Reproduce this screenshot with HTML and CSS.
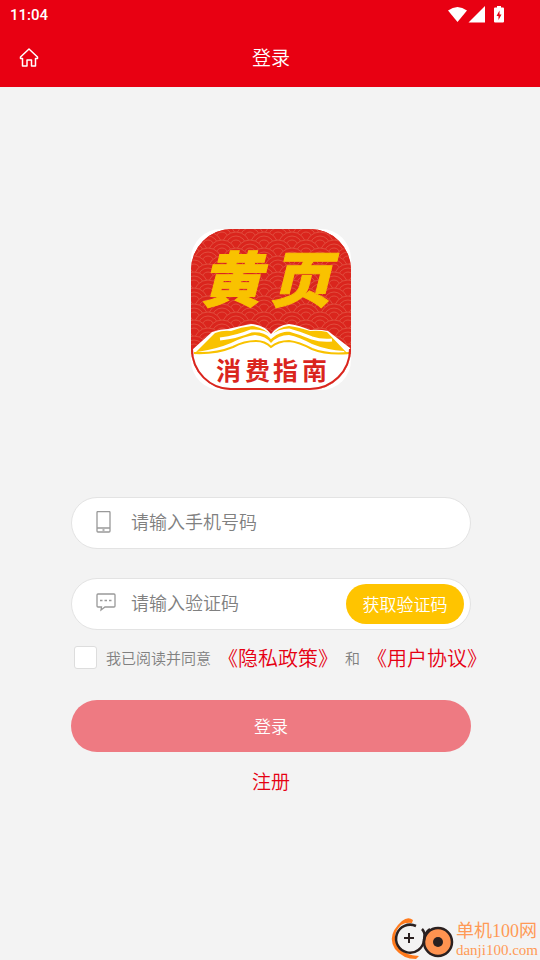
FILE: index.html
```html
<!DOCTYPE html>
<html lang="zh-CN">
<head>
<meta charset="utf-8">
<meta name="viewport" content="width=device-width, initial-scale=1">
<title>登录</title>
<link rel="stylesheet" href="styles.css">
</head>
<body>
<header class="header">
  <div class="status">
    <time class="clock">11:04</time>
    <svg class="status-icons" width="58" height="18" viewBox="0 0 58 18" aria-hidden="true">
      <path d="M0 4.500Q9.500-2.500 19 4.500L9.500 16Z"/>
      <path d="M37 0V16.500H20.500Z"/>
      <path d="M49 0h4v1.500h2q1 0 1 1V15.500q0 1-1 1H47q-1 0-1-1V2.500q0-1 1-1h2Z"/>
      <path class="bolt" d="M51.500 4.500v4h2l-3 5.500v-4h-2Z"/>
    </svg>
  </div>
  <nav class="navbar">
    <a class="home" href="#" aria-label="首页">
      <svg width="20" height="20" viewBox="0 0 20 20" aria-hidden="true">
        <path d="M1.500 10 10 2l8.500 8V11.500H16.500V19h-4V13h-4.500V19H3.500V11.500H1.500Z"/>
      </svg>
    </a>
    <h1 class="title">登录</h1>
  </nav>
</header>

<main class="content">
  <svg class="logo" width="160" height="161" viewBox="0 0 160 161" role="img" aria-label="黄页消费指南">
    <defs>
      <g id="scale" class="wave"><circle r="14"/><circle r="10"/><circle r="6"/></g>
      <pattern id="waves" width="28" height="16" patternUnits="userSpaceOnUse" patternTransform="translate(3 1)">
        <use href="#scale" x="0" y="-8"/><use href="#scale" x="28" y="-8"/>
        <use href="#scale" x="14" y="0"/>
        <use href="#scale" x="0" y="8"/><use href="#scale" x="28" y="8"/>
        <use href="#scale" x="14" y="16"/>
        <use href="#scale" x="0" y="24"/><use href="#scale" x="28" y="24"/>
      </pattern>
      <clipPath id="badge"><rect width="160" height="161" rx="41"/></clipPath>
    </defs>
    <rect class="paper" width="160" height="161" rx="30"/>
    <g clip-path="url(#badge)">
      <rect class="red" width="160" height="161"/>
      <rect fill="url(#waves)" width="160" height="125"/>
      <path class="paper" d="M1 121 21 103Q29 100 37 100 49 97 60 95 73 96 80 105 87 96 98 95 107 96 119 101 128 100 137 102L159 119V161H1Z"/>
      <path class="gold" d="M3 125 24 104Q32 101 40 102 50 98 61 97 74 99 80 107 87 98 98 97 107 98 119 102 128 101 136 103L157 125Q138 127 122 122C106 117 92 112 80 119 70 111 56 112 40 119Q22 126 3 125Z"/>
      <path class="fold" d="M29 110Q46 108 60 102 74 101 80 108 88 101 98 101 109 104 121 109 130 112 141 111"/>
      <path class="paper" d="M6 123Q26 120 40 114 54 107 64 106 75 107 80 114 87 106 98 106 108 108 121 115 136 121 153 122L156 128H4Z"/>
      <path class="goldline" d="M3 124Q25 125 42 118 53 112 65 112 74 112 80 118 87 112 98 112 108 113 121 120 136 126 158 124"/>
    </g>
    <path class="rim" d="M1 120A39 40 0 0 0 41 160H119A40 40 0 0 0 159 120"/>
    <text class="logo-name" x="10 79" y="73">黄页</text>
    <text class="logo-guide" x="25 54 82 111" y="151">消费指南</text>
  </svg>

  <form class="form">
    <label class="field">
      <svg class="field-icon" width="20" height="24" viewBox="0 0 20 24" aria-hidden="true">
        <rect x="1" y="0.500" width="13" height="20.500" rx="1"/><path d="M1 17h13M6.500 19h2"/>
      </svg>
      <input class="input" type="tel" placeholder="请输入手机号码" aria-label="手机号码">
    </label>
    <div class="field">
      <svg class="field-icon" width="20" height="24" viewBox="0 0 20 24" aria-hidden="true">
        <path d="M2 2h16q1 0 1 1V14q0 1-1 1H9l-4 3 .5-3H2q-1 0-1-1V3q0-1 1-1Z"/><path d="M4 8.500h2.500M8.500 8.500h2.500M13 8.500h2.500"/>
      </svg>
      <input class="input" type="text" placeholder="请输入验证码" aria-label="验证码">
      <button class="code" type="button">获取验证码</button>
    </div>
    <div class="consent">
      <input class="check" id="agree" type="checkbox">
      <label class="agree" for="agree">我已阅读并同意</label>
      <a class="policy" href="#">《隐私政策》</a>
      <span>和</span>
      <a class="policy" href="#">《用户协议》</a>
    </div>
    <button class="submit" type="submit">登录</button>
  </form>
  <a class="register" href="#">注册</a>
</main>

<aside class="mark">
  <svg width="64" height="44" viewBox="0 0 64 44" aria-hidden="true">
    <path class="mark-swoosh" d="M22 4Q17 0 11 5-5 19 4 33 12 43 25 43L28 40Q14 39 8 32-1 20 10 9 15 6 21 7Z"/>
    <path class="mark-ring" d="M25 10A14 14 0 1 0 33 24Q35 17 31 13"/>
    <path class="mark-plus" d="M18 17v10M13 22h10"/>
    <circle class="mark-disc" cx="47" cy="26" r="14"/>
    <path class="mark-ring" d="M33 24Q34 16 39 13"/>
    <circle class="mark-dot" cx="47" cy="26" r="5"/>
  </svg>
  <div class="mark-text">
    <span class="mark-name">单机100网</span>
    <span class="mark-site">danji100.com</span>
  </div>
</aside>
</body>
</html>
```
FILE: styles.css
```css
* { box-sizing: border-box; }

body {
  margin: 0;
  min-height: 100vh;
  display: flex;
  flex-direction: column;
  background: #f3f3f3;
  color: #808080;
  font-family: "Noto Sans CJK SC", sans-serif;
  font-size: 15px;
  font-weight: 350;
}

a { color: #e60012; text-decoration: none; }

button {
  border: 0;
  padding: 0 0 2px;
  color: #fff;
  font: inherit;
  font-size: 17px;
}

.header { background: #e80012; color: #fff; }

.status {
  display: flex;
  justify-content: space-between;
  align-items: center;
  height: 30px;
  padding: 0 34px 0 10px;
}

.clock { font: 500 15px/20px Roboto, sans-serif; }
.status-icons { fill: #fff; }
.status-icons .bolt { fill: #e80012; }

.navbar {
  display: grid;
  grid-template-columns: 40px 1fr 40px;
  align-items: center;
  height: 57px;
  padding: 0 17px 4px 19px;
}

.home { display: flex; }
.home svg { fill: none; stroke: #fff; stroke-width: 1.5; stroke-linejoin: round; }
.title { margin: 0; text-align: center; font-size: 19px; font-weight: 350; }

.content {
  flex: 1;
  display: flex;
  flex-direction: column;
  align-items: center;
  padding: 142px 69px 0 71px;
}

.logo { display: block; }
.paper { fill: #fff; }
.red { fill: #da251d; }
.gold { fill: #f9c200; }
.fold { fill: none; stroke: #fff; stroke-width: 3; }
.goldline { fill: none; stroke: #f9c200; stroke-width: 2; }
.rim { fill: none; stroke: #da251d; stroke-width: 2; }
.wave circle { fill: #da251d; stroke: #e14b3c; stroke-width: 1; }
.logo-name {
  fill: #f9c200;
  stroke: #f9c200;
  stroke-width: 1;
  font-size: 60px;
  font-weight: 900;
  font-style: italic;
}
.logo-guide { fill: #da251d; font-size: 25px; font-weight: 700; }

.form { width: 100%; margin-top: 107px; }

.field {
  display: flex;
  align-items: center;
  height: 52px;
  margin: 0 0 29px;
  padding: 0 6px 0 24px;
  border: 1px solid #e3e3e3;
  border-radius: 26px;
  background: #fff;
}

.field-icon { flex: none; fill: none; stroke: #999; stroke-width: 1.3; }

.input {
  flex: 1;
  min-width: 0;
  height: 48px;
  margin-left: 15px;
  padding: 0 0 5px;
  border: 0;
  outline: 0;
  background: none;
  color: #333;
  font: 350 18px "Noto Sans CJK SC", sans-serif;
}
.input::placeholder { color: #808080; opacity: 1; }

.code {
  width: 118px;
  height: 40px;
  border-radius: 20px;
  background: #ffc400;
}

.consent {
  display: flex;
  align-items: center;
  height: 30px;
  margin: -17px -12px 28px 3px;
  white-space: nowrap;
}

.check {
  flex: none;
  appearance: none;
  width: 23px;
  height: 23px;
  margin: 0 9px 0 0;
  border: 1px solid #ddd;
  border-radius: 3px;
  background: #fff;
}
.check:checked { background: #e60012; }

.policy { margin: 0 7px; font-size: 20px; }

.submit {
  display: block;
  width: 100%;
  height: 52px;
  border-radius: 26px;
  background: #ee7a82;
}

.register { margin-top: 15px; font-size: 19px; }

.mark {
  display: flex;
  align-self: flex-end;
  align-items: center;
  gap: 1px;
  padding-right: 2px;
  color: #ff9a56;
}
.mark svg { fill: none; }
.mark-text { display: flex; flex-direction: column; padding-top: 4px; }
.mark-name { font: 18px/20px "Liberation Serif", "Noto Sans CJK SC", serif; }
.mark-site { font: 15px/18px "Liberation Serif", serif; }
.mark-swoosh { fill: #ff7a1c; }
.mark-ring { stroke: #2a2020; stroke-width: 2.5; }
.mark-plus { stroke: #2a2020; stroke-width: 2; }
.mark-disc { fill: #ff9350; stroke: #2a2020; stroke-width: 2.5; }
.mark-dot { fill: #2a2020; }
```
